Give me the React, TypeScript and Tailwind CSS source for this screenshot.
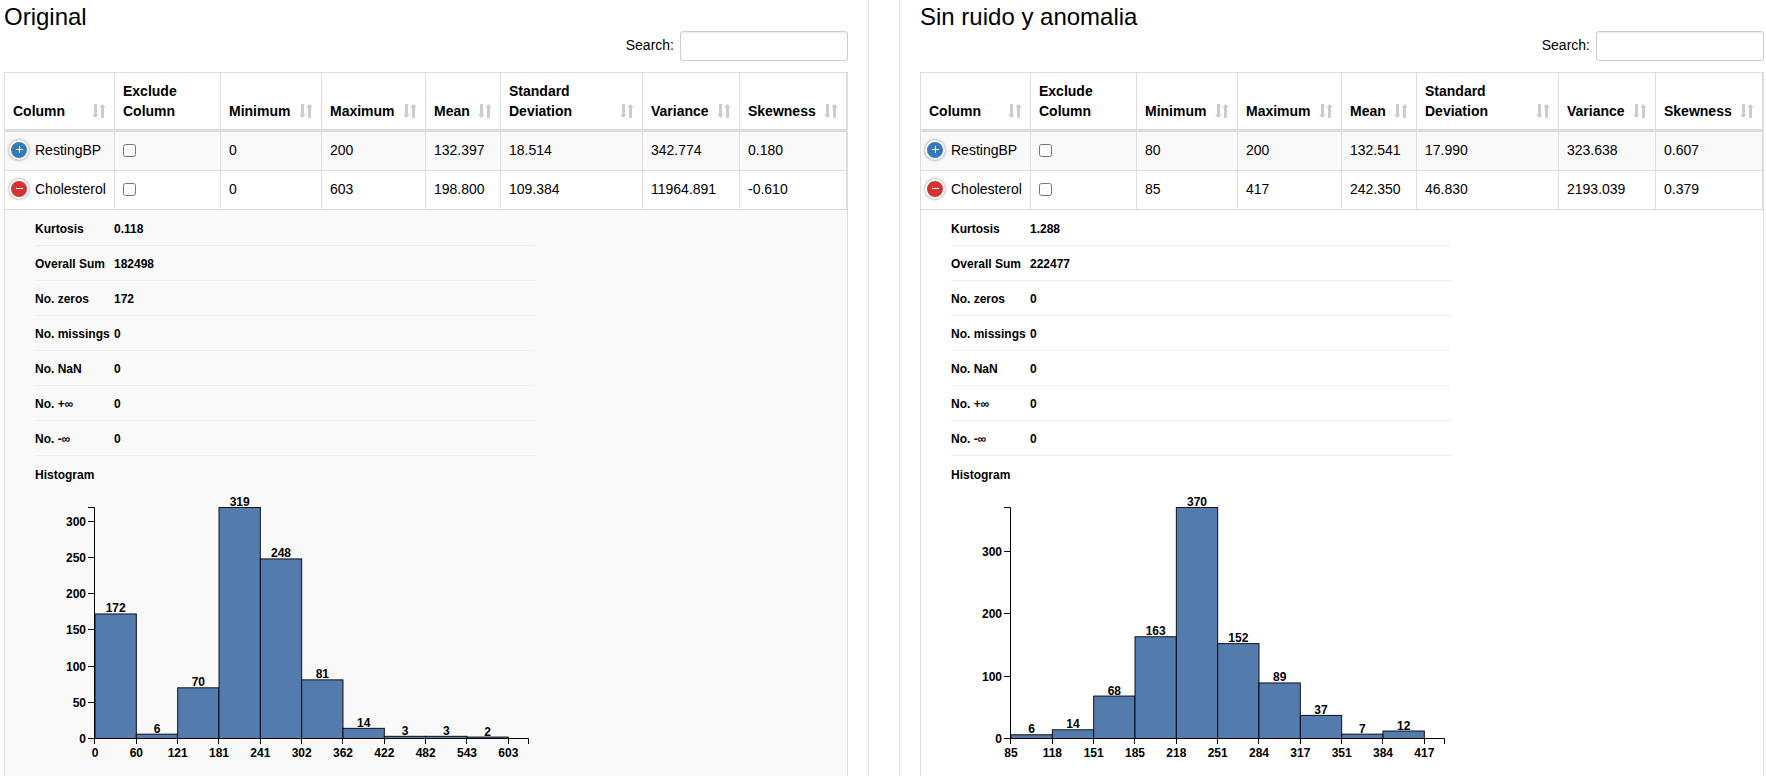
import { useId } from 'react';

type Stat = { label: string; value: string };
type Chart = { counts: number[]; edges: number[]; yTicks: number[] };
type Panel = {
  title: string;
  rows: { name: string; open: boolean; values: string[] }[];
  stats: Stat[];
  chart: Chart;
};

const headers = [
  { label: 'Column', width: 'w-[110px]', sortable: true },
  { label: 'Exclude Column', width: 'w-[106px]', sortable: false },
  { label: 'Minimum', width: 'w-[101px]', sortable: true },
  { label: 'Maximum', width: 'w-[104px]', sortable: true },
  { label: 'Mean', width: 'w-[75px]', sortable: true },
  { label: 'Standard Deviation', width: 'w-[142px]', sortable: true },
  { label: 'Variance', width: 'w-[97px]', sortable: true },
  { label: 'Skewness', width: 'w-[107px]', sortable: true },
];

const original: Panel = {
  title: 'Original',
  rows: [
    { name: 'RestingBP', open: false, values: ['0', '200', '132.397', '18.514', '342.774', '0.180'] },
    { name: 'Cholesterol', open: true, values: ['0', '603', '198.800', '109.384', '11964.891', '-0.610'] },
  ],
  stats: [
    { label: 'Kurtosis', value: '0.118' },
    { label: 'Overall Sum', value: '182498' },
    { label: 'No. zeros', value: '172' },
    { label: 'No. missings', value: '0' },
    { label: 'No. NaN', value: '0' },
    { label: 'No. +∞', value: '0' },
    { label: 'No. -∞', value: '0' },
  ],
  chart: {
    counts: [172, 6, 70, 319, 248, 81, 14, 3, 3, 2],
    edges: [0, 60, 121, 181, 241, 302, 362, 422, 482, 543, 603],
    yTicks: [0, 50, 100, 150, 200, 250, 300],
  },
};

const cleaned: Panel = {
  title: 'Sin ruido y anomalia',
  rows: [
    { name: 'RestingBP', open: false, values: ['80', '200', '132.541', '17.990', '323.638', '0.607'] },
    { name: 'Cholesterol', open: true, values: ['85', '417', '242.350', '46.830', '2193.039', '0.379'] },
  ],
  stats: [
    { label: 'Kurtosis', value: '1.288' },
    { label: 'Overall Sum', value: '222477' },
    { label: 'No. zeros', value: '0' },
    { label: 'No. missings', value: '0' },
    { label: 'No. NaN', value: '0' },
    { label: 'No. +∞', value: '0' },
    { label: 'No. -∞', value: '0' },
  ],
  chart: {
    counts: [6, 14, 68, 163, 370, 152, 89, 37, 7, 12],
    edges: [85, 118, 151, 185, 218, 251, 284, 317, 351, 384, 417],
    yTicks: [0, 100, 200, 300],
  },
};

function SortIcon() {
  return (
    <svg width="14" height="14" viewBox="0 0 14 14" fill="#cccccc" className="mb-[3px] shrink-0" aria-hidden="true">
      <path d="M2 0h3v10.5h1.5L3.5 14 0 10.5h2z" />
      <path d="M9 14h3V3.5h1.8L10.5 0 7.2 3.5H9z" />
    </svg>
  );
}

function Histogram({ counts, edges, yTicks }: Chart) {
  const width = 434;
  const height = 231;
  const bar = width / 10.5;
  const max = Math.max(...counts);
  const y = (v: number) => height - (v / max) * height;
  return (
    <svg width="500" height="300" className="block text-[12px] font-bold" role="img" aria-label="Histogram">
      <g transform="translate(59 22)">
        {counts.map((c, i) => (
          <g key={i}>
            <rect
              x={i * bar + 1}
              y={y(c) + 0.5}
              width={bar}
              height={height - y(c)}
              fill="#537bad"
              stroke="black"
              strokeOpacity="0.9"
            />
            <text x={(i + 0.5) * bar + 1} y={y(c) - 1} textAnchor="middle">{c}</text>
          </g>
        ))}
        <path d={`M-6 0.5H0.5V${height + 0.5}H-6`} fill="none" stroke="black" />
        <path d={`M0.5 ${height + 6}V${height + 0.5}H${width + 0.5}V${height + 6}`} fill="none" stroke="black" />
        {yTicks.map((t) => (
          <g key={t}>
            <path d={`M-6 ${Math.round(y(t)) + 0.5}H0`} stroke="black" />
            <text x="-8" y={y(t) + 5} textAnchor="end">{t}</text>
          </g>
        ))}
        {edges.map((e, i) => (
          <g key={e}>
            <path d={`M${Math.ceil(i * bar - 0.01) + 0.5} ${height}v6`} stroke="black" />
            <text x={i * bar + 1} y={height + 19} textAnchor="middle">{e}</text>
          </g>
        ))}
      </g>
    </svg>
  );
}

function StatsTable({ data, shaded }: { data: Panel; shaded: boolean }) {
  const searchId = useId();
  return (
    <>
      <h2 className="text-2xl leading-[26px]">{data.title}</h2>
      <div className="mt-px flex items-center justify-end gap-[6px]">
        <label htmlFor={searchId} className="pb-0.5">Search:</label>
        <input
          id={searchId}
          type="search"
          className="h-[30px] w-[168px] rounded-[3px] border border-[#cccccc] bg-white px-2 shadow-[inset_0_1px_1px_rgba(0,0,0,0.075)]"
        />
      </div>
      <table className="mt-[11px] w-full table-fixed border-separate border-spacing-0 border border-[#dddddd] text-left">
        <thead>
          <tr>
            {headers.map((h) => (
              <th key={h.label} scope="col" className={`${h.width} h-[59px] border-r border-b-3 border-[#dddddd] p-2 align-bottom font-bold`}>
                {h.sortable ? (
                  <button type="button" className="flex w-full items-end justify-between text-left font-bold">
                    <span>{h.label}</span>
                    <SortIcon />
                  </button>
                ) : (
                  h.label
                )}
              </th>
            ))}
          </tr>
        </thead>
        <tbody>
          {data.rows.map((r) => (
            <tr key={r.name} className={r.open ? 'bg-white' : 'bg-[#f9f9f9]'}>
              <td className="h-[39px] border-r border-b border-[#dddddd] pb-0.5 pl-1">
                <div className="flex items-center gap-[6px]">
                  <button
                    type="button"
                    aria-label={`Details of ${r.name}`}
                    aria-expanded={r.open}
                    className={`flex size-5 items-center justify-center rounded-full border-2 border-white shadow-[0_0_3px_rgba(0,0,0,0.5)] ${r.open ? 'bg-[#d33333]' : 'bg-[#337ab7]'}`}
                  >
                    <svg width="8" height="8" viewBox="0 0 8 8" stroke="white" aria-hidden="true">
                      <path d={r.open ? 'M1 3.5H8' : 'M1 3.5H8M4.5 0V7'} />
                    </svg>
                  </button>
                  <span>{r.name}</span>
                </div>
              </td>
              <td className="border-r border-b border-[#dddddd] px-2 pb-0.5">
                <input type="checkbox" aria-label={`Exclude ${r.name}`} className="block size-[13px]" />
              </td>
              {r.values.map((v, i) => (
                <td key={i} className="border-r border-b border-[#dddddd] px-2 pb-0.5">{v}</td>
              ))}
            </tr>
          ))}
          <tr className={shaded ? 'bg-[#f9f9f9]' : 'bg-white'}>
            <td colSpan={8} className="pt-px pl-[30px] text-[12px] font-bold">
              <ul className="w-[500px]">
                {data.stats.map((s) => (
                  <li key={s.label} className="flex h-[35px] items-center gap-1 border-b border-[#efefef] pt-1">
                    <span className="w-[75px] whitespace-nowrap">{s.label}</span>
                    <span>{s.value}</span>
                  </li>
                ))}
                <li className="pt-[9px]">
                  <span className="block leading-5">Histogram</span>
                  <Histogram {...data.chart} />
                </li>
              </ul>
            </td>
          </tr>
        </tbody>
      </table>
    </>
  );
}

export default function App() {
  return (
    <main className="flex h-screen gap-[30px] overflow-hidden bg-white font-['Liberation_Sans',Arial,sans-serif] text-sm text-black">
      <section className="min-w-0 flex-1 border-r border-[#dddddd] pt-1 pr-5 pl-1">
        <StatsTable data={original} shaded />
      </section>
      <section className="min-w-0 flex-1 border-l border-[#dddddd] pt-1 pr-[2px] pl-5">
        <StatsTable data={cleaned} shaded={false} />
      </section>
    </main>
  );
}
